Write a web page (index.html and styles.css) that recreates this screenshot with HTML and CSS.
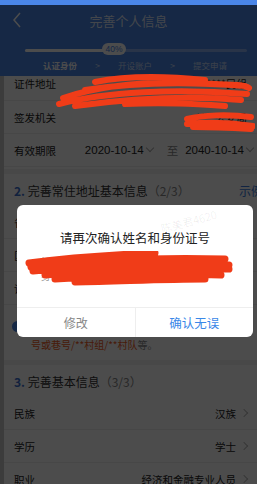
FILE: index.html
```html
<!DOCTYPE html>
<html lang="zh-CN">
<head>
    <meta charset="UTF-8">
    <meta name="viewport" content="width=device-width, initial-scale=1.0">
    <title>完善个人信息</title>
    <link rel="stylesheet" href="styles.css">
</head>
<body>
    <div class="status-bar"></div>

    <div class="header">
        <div class="title-row">
            <svg class="back" width="10" height="16" viewBox="0 0 10 16"><path d="M8 1 L2 8 L8 15" fill="none" stroke="#ffffff" stroke-width="1.5"/></svg>
            <h1>完善个人信息</h1>
        </div>
        <div class="progress">
            <div class="progress-fill"></div>
            <span class="progress-label">40%</span>
        </div>
        <div class="steps">
            <span class="step active">认证身份</span>
            <span class="arrow">&gt;</span>
            <span class="step">开设账户</span>
            <span class="arrow">&gt;</span>
            <span class="step">提交申请</span>
        </div>
    </div>

    <div class="content">
        <div class="row first">
            <span class="label">证件地址</span>
            <span class="value">********民组</span>
        </div>
        <div class="row">
            <span class="label">签发机关</span>
            <span class="value">****公安局</span>
        </div>
        <div class="row dates-row">
            <span class="label">有效期限</span>
            <div class="dates">
                <span class="date">2020-10-14<i class="chev-down"></i></span>
                <span class="to">至</span>
                <span class="date">2040-10-14<i class="chev-down"></i></span>
            </div>
        </div>

        <div class="section-title">
            <span><b>2.</b> 完善常住地址基本信息<em>（2/3）</em></span>
            <a class="example">示例</a>
        </div>
        <div class="row"><span class="label">省市区</span></div>
        <div class="row"><span class="label">区县</span></div>
        <div class="row"><span class="label">详细地址</span></div>
        <div class="tip">
            <i class="tip-icon">i</i>
            <p>请填写详细地址，精确到门牌号，如**路**<br>号或巷号/**村组/**村队<span>等。</span></p>
        </div>

        <div class="section-title">
            <span><b>3.</b> 完善基本信息<em>（3/3）</em></span>
        </div>
        <div class="row">
            <span class="label">民族</span>
            <span class="value">汉族<i class="chev-right"></i></span>
        </div>
        <div class="row">
            <span class="label">学历</span>
            <span class="value">学士<i class="chev-right"></i></span>
        </div>
        <div class="row">
            <span class="label">职业</span>
            <span class="value">经济和金融专业人员<i class="chev-right"></i></span>
        </div>
    </div>

    <div class="mask"></div>

    <div class="dialog">
        <div class="dialog-body">
            <h2>请再次确认姓名和身份证号</h2>
            <div class="dialog-info">
                <p>姓名 ***</p>
                <p>身份证号 ******************</p>
            </div>
        </div>
        <div class="dialog-actions">
            <button class="btn-cancel">修改</button>
            <button class="btn-ok">确认无误</button>
        </div>
        <span class="watermark">陈美君4620</span>
    </div>

    <!-- redaction scribbles -->
    <svg class="scribble s1" width="200" height="36" viewBox="0 0 200 36">
        <path d="M40 8 C70 2 110 2 150 6 M8 24 C50 10 100 6 160 10 C175 11 188 10 194 14 M4 30 C50 18 120 14 192 20 M20 32 C80 24 140 22 186 26 M70 30 C110 28 140 30 170 32 M30 16 C80 8 140 8 190 12" fill="none" stroke="#f03c18" stroke-width="6" stroke-linecap="round"/>
    </svg>
    <svg class="scribble s2" width="72" height="20" viewBox="0 0 72 20">
        <path d="M4 7 C20 3 45 2 68 5 M4 12 C25 10 50 11 70 14 M10 15 C30 15 50 16 68 17" fill="none" stroke="#f03c18" stroke-width="6" stroke-linecap="round"/>
    </svg>
    <svg class="scribble s3" width="210" height="36" viewBox="0 0 210 36">
        <path d="M4 12 C50 6 80 4 130 2 M6 16 C60 10 130 6 200 8 M8 20 C70 14 140 12 204 14 M20 24 C80 18 150 16 204 18 M30 28 C90 24 150 22 196 24 M50 31 C100 30 140 28 180 28 M20 20 C70 18 120 20 170 24" fill="none" stroke="#f03c18" stroke-width="7" stroke-linecap="round"/>
    </svg>
</body>
</html>
```

FILE: styles.css
```css
* {
    margin: 0;
    padding: 0;
    box-sizing: border-box;
}

body {
    font-family: "Noto Sans CJK SC", "Noto Sans", sans-serif;
    background: #f2f2f2;
    width: 257px;
    height: 484px;
    overflow: hidden;
    position: relative;
}

.status-bar {
    height: 5px;
    background: #4a86e8;
    position: relative;
    z-index: 3;
}

.header {
    background: #4a86e8;
    height: 71px;
    padding: 0 10px;
    color: #ffffff;
}

.title-row {
    height: 30px;
    display: flex;
    align-items: center;
    justify-content: center;
    position: relative;
}

.back {
    position: absolute;
    left: 2px;
    top: 7px;
}

.title-row h1 {
    font-size: 13px;
    font-weight: 400;
    color: rgba(255, 255, 255, 0.85);
}

.progress {
    margin: 14px 0 0 15px;
    width: 222px;
    height: 3px;
    border-radius: 2px;
    background: rgba(255, 255, 255, 0.35);
    position: relative;
}

.progress-fill {
    width: 40%;
    height: 100%;
    background: #ffffff;
    border-radius: 2px;
}

.progress-label {
    position: absolute;
    left: 77px;
    top: -6px;
    width: 24px;
    text-align: center;
    height: 12px;
    line-height: 12px;
    border-radius: 6px;
    background: #ffffff;
    color: #4a86e8;
    font-size: 8.5px;
    font-family: "Liberation Sans", sans-serif;
}

.steps {
    display: flex;
    margin-top: 6px;
    padding-left: 33px;
    font-size: 8.5px;
    line-height: 14px;
    color: rgba(255, 255, 255, 0.7);
}

.step.active {
    color: #ffffff;
    font-weight: 700;
}

.arrow {
    width: 41px;
    text-align: center;
}

.content {
    background: #ffffff;
    border-left: 4px solid #c8c8c8;
}

.row {
    height: 33px;
    padding: 0 10px;
    display: flex;
    align-items: center;
    justify-content: space-between;
    border-bottom: 1px solid #eeeeee;
    font-size: 10.5px;
    color: #222222;
}

.row.first {
    height: 25px;
    align-items: flex-start;
}

.dates-row {
    padding-right: 4px;
}

.value {
    display: flex;
    align-items: center;
    color: #222222;
}

.dates {
    display: flex;
    align-items: center;
    font-size: 11.5px;
    font-family: "Liberation Sans", sans-serif;
}

.date {
    display: flex;
    align-items: center;
}

.to {
    margin: 0 7px 0 14px;
    color: #888888;
    font-family: "Noto Sans CJK SC", sans-serif;
}

.chev-down {
    width: 6px;
    height: 6px;
    border-right: 1px solid #aaaaaa;
    border-bottom: 1px solid #aaaaaa;
    transform: rotate(45deg);
    margin: -4px 0 0 3px;
}

.chev-right {
    width: 6px;
    height: 6px;
    border-right: 1px solid #bbbbbb;
    border-top: 1px solid #bbbbbb;
    transform: rotate(45deg);
    margin-left: 5px;
}

.section-title {
    height: 37px;
    margin-top: 2px;
    padding: 0 0 0 10px;
    display: flex;
    align-items: center;
    justify-content: space-between;
    font-size: 12px;
    color: #333333;
    border-top: 5px solid #f2f2f2;
}

.section-title b {
    color: #3a6fd0;
}

.section-title em {
    font-style: normal;
    color: #888888;
}

.example {
    color: #3a7be0;
    margin-right: -6px;
}

.tip {
    display: flex;
    gap: 8px;
    padding: 14px 10px 5px 8px;
    font-size: 10px;
    color: #f05a22;
}

.tip-icon {
    flex: none;
    width: 11px;
    height: 11px;
    margin-top: 2px;
    border-radius: 50%;
    background: #4a86e8;
    color: #ffffff;
    font-size: 8px;
    font-style: normal;
    text-align: center;
    line-height: 11px;
}

.tip p {
    line-height: 17px;
}

.tip span {
    color: #888888;
}

.mask {
    position: absolute;
    top: 5px;
    left: 0;
    right: 0;
    bottom: 0;
    background: rgba(0, 0, 0, 0.7);
    z-index: 1;
}

.dialog {
    position: absolute;
    left: 17px;
    top: 205px;
    width: 236px;
    background: #ffffff;
    border-radius: 6px;
    z-index: 2;
    overflow: hidden;
}

.dialog-body {
    height: 102px;
    padding-top: 23px;
    text-align: center;
}

.dialog-body h2 {
    font-size: 12.5px;
    font-weight: 400;
    color: #222222;
}

.dialog-info {
    margin-top: 8px;
    padding-left: 24px;
    text-align: left;
    font-size: 10px;
    color: #999999;
    line-height: 14px;
}

.dialog-actions {
    display: flex;
    height: 30px;
    border-top: 1px solid #eeeeee;
}

.dialog-actions button {
    flex: 1;
    border: none;
    background: none;
    font-family: inherit;
    font-size: 12px;
}

.btn-cancel {
    color: #888888;
    border-right: 1px solid #eeeeee !important;
}

.btn-ok {
    color: #3a88e8;
    font-size: 12.5px !important;
}

.watermark {
    position: absolute;
    left: 143px;
    top: 8px;
    transform: rotate(-15deg);
    font-size: 11px;
    color: rgba(0, 0, 0, 0.07);
}

.scribble {
    position: absolute;
    z-index: 4;
}

.s1 {
    left: 55px;
    top: 74px;
}

.s2 {
    left: 183px;
    top: 112px;
}

.s3 {
    left: 25px;
    top: 251px;
}
```
